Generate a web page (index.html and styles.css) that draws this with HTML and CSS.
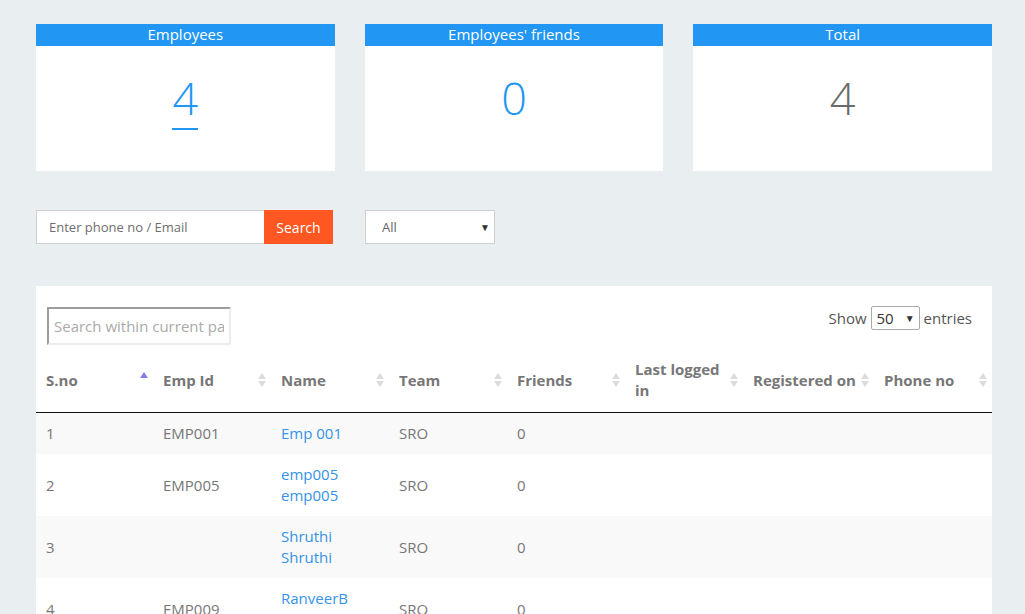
FILE: index.html
```html
<!DOCTYPE html>
<html lang="en">
<head>
<meta charset="utf-8">
<title>Employees</title>
<link rel="stylesheet" href="styles.css">
</head>
<body>
<div class="page">
  <div class="cards">
    <div class="card">
      <div class="card-head">Employees</div>
      <div class="card-body"><a class="stat stat-link" href="#">4</a></div>
    </div>
    <div class="card">
      <div class="card-head">Employees' friends</div>
      <div class="card-body"><span class="stat">0</span></div>
    </div>
    <div class="card">
      <div class="card-head">Total</div>
      <div class="card-body"><span class="stat stat-grey">4</span></div>
    </div>
  </div>

  <div class="filters">
    <div class="search-group">
      <input class="search-input" type="text" placeholder="Enter phone no / Email">
      <button class="search-btn">Search</button>
    </div>
    <div class="select-box">
      <span>All</span>
      <span class="caret">&#9660;</span>
    </div>
  </div>

  <div class="panel">
    <div class="panel-controls">
      <input class="page-search" type="text" placeholder="Search within current page">
      <div class="length">
        <span>Show</span>
        <div class="length-select"><span>50</span><span class="caret">&#9660;</span></div>
        <span>entries</span>
      </div>
    </div>
    <table class="grid">
      <colgroup>
        <col style="width:117px"><col style="width:118px"><col style="width:118px"><col style="width:118px">
        <col style="width:118px"><col style="width:118px"><col style="width:131px"><col style="width:118px">
      </colgroup>
      <thead>
        <tr>
          <th><div class="th"><span>S.no</span><svg class="sort sort-active" width="8" height="16" viewBox="0 0 8 16"><path d="M0 7 L4 1 L8 7 Z" fill="#7f7fe3"/></svg></div></th>
          <th><div class="th"><span>Emp Id</span><svg class="sort" width="8" height="16" viewBox="0 0 8 16"><path d="M0 7 L4 1 L8 7 Z M0 9 L8 9 L4 15 Z" fill="#dcdcdc"/></svg></div></th>
          <th><div class="th"><span>Name</span><svg class="sort" width="8" height="16" viewBox="0 0 8 16"><path d="M0 7 L4 1 L8 7 Z M0 9 L8 9 L4 15 Z" fill="#dcdcdc"/></svg></div></th>
          <th><div class="th"><span>Team</span><svg class="sort" width="8" height="16" viewBox="0 0 8 16"><path d="M0 7 L4 1 L8 7 Z M0 9 L8 9 L4 15 Z" fill="#dcdcdc"/></svg></div></th>
          <th><div class="th"><span>Friends</span><svg class="sort" width="8" height="16" viewBox="0 0 8 16"><path d="M0 7 L4 1 L8 7 Z M0 9 L8 9 L4 15 Z" fill="#dcdcdc"/></svg></div></th>
          <th><div class="th"><span>Last logged in</span><svg class="sort" width="8" height="16" viewBox="0 0 8 16"><path d="M0 7 L4 1 L8 7 Z M0 9 L8 9 L4 15 Z" fill="#dcdcdc"/></svg></div></th>
          <th><div class="th"><span class="nowrap">Registered on</span><svg class="sort" width="8" height="16" viewBox="0 0 8 16"><path d="M0 7 L4 1 L8 7 Z M0 9 L8 9 L4 15 Z" fill="#dcdcdc"/></svg></div></th>
          <th><div class="th"><span>Phone no</span><svg class="sort" width="8" height="16" viewBox="0 0 8 16"><path d="M0 7 L4 1 L8 7 Z M0 9 L8 9 L4 15 Z" fill="#dcdcdc"/></svg></div></th>
        </tr>
      </thead>
      <tbody>
        <tr class="odd">
          <td>1</td><td>EMP001</td><td><a href="#">Emp 001</a></td><td>SRO</td><td>0</td><td></td><td></td><td></td>
        </tr>
        <tr>
          <td>2</td><td>EMP005</td><td><a href="#">emp005<br>emp005</a></td><td>SRO</td><td>0</td><td></td><td></td><td></td>
        </tr>
        <tr class="odd">
          <td>3</td><td></td><td><a href="#">Shruthi<br>Shruthi</a></td><td>SRO</td><td>0</td><td></td><td></td><td></td>
        </tr>
        <tr>
          <td>4</td><td>EMP009</td><td><a href="#">RanveerB<br>RanveerB</a></td><td>SRO</td><td>0</td><td></td><td></td><td></td>
        </tr>
      </tbody>
    </table>
  </div>
</div>
</body>
</html>
```

FILE: styles.css
```css
* { box-sizing: border-box; }

html, body {
  margin: 0;
  padding: 0;
  background: #e9eef1;
  font-family: "Open Sans", "Liberation Sans", sans-serif;
  color: #777;
  overflow: hidden;
}

.page {
  padding: 24px 33px 0 36px;
}

.cards {
  display: grid;
  grid-template-columns: 1fr 1fr 1fr;
  column-gap: 30px;
}

.card {
  background: #fff;
  height: 147px;
}

.card-head {
  background: #2196f3;
  color: #fff;
  height: 22px;
  line-height: 20px;
  font-size: 15px;
  text-align: center;
}

.card-body {
  text-align: center;
  padding-top: 29px;
}

.stat {
  display: inline-block;
  font-size: 45px;
  font-weight: 300;
  line-height: 45px;
  color: #2196f3;
  text-decoration: none;
}

.stat-link {
  padding-bottom: 8px;
  border-bottom: 2px solid #2196f3;
}

.stat-grey {
  color: #6b6b6b;
}

.filters {
  display: flex;
  gap: 32px;
  margin-top: 39px;
}

.search-group {
  display: flex;
}

.search-input {
  width: 228px;
  height: 34px;
  border: 1px solid #cfcfcf;
  border-right: none;
  padding: 0 12px;
  font-family: inherit;
  font-size: 13px;
  color: #555;
  outline: none;
}

.search-input::placeholder { color: #6e6e6e; }

.search-btn {
  width: 69px;
  height: 34px;
  border: none;
  background: #ff5722;
  color: #fff;
  font-family: inherit;
  font-size: 14px;
  padding: 0;
}

.select-box {
  width: 130px;
  height: 34px;
  background: #fff;
  border: 1px solid #cfcfcf;
  display: flex;
  align-items: center;
  justify-content: space-between;
  padding: 0 4px 0 16px;
  font-size: 13px;
  color: #666;
}

.caret {
  font-size: 10px;
  color: #333;
}

.panel {
  background: #fff;
  margin-top: 42px;
  padding-top: 20px;
}

.panel-controls {
  display: flex;
  justify-content: space-between;
  align-items: flex-start;
  padding: 0 20px 0 11px;
}

.page-search {
  margin-top: 1px;
  width: 184px;
  height: 38px;
  border-style: solid;
  border-width: 2px;
  border-color: #9d9d9d #ececec #ececec #9d9d9d;
  padding: 0 5px;
  font-family: inherit;
  font-size: 15px;
  color: #555;
  outline: none;
}

.page-search::placeholder { color: #aaa; }

.length {
  display: flex;
  align-items: center;
  gap: 4px;
  font-size: 15px;
  color: #555;
  height: 24px;
}

.length-select {
  width: 49px;
  height: 24px;
  border: 1px solid #aaa;
  border-radius: 2px;
  display: flex;
  align-items: center;
  justify-content: space-between;
  padding: 0 4px 0 5px;
  color: #333;
}

.grid {
  width: 100%;
  margin-top: 5px;
  border-collapse: collapse;
  table-layout: fixed;
  font-size: 15px;
  line-height: 21px;
}

.grid th {
  text-align: left;
  font-weight: 700;
  color: #777;
  padding: 9px 5px 11px 10px;
  height: 62px;
  border-bottom: 1px solid #111;
  vertical-align: middle;
}

.th {
  display: flex;
  align-items: center;
  justify-content: space-between;
  gap: 2px;
}

.nowrap { white-space: nowrap; }

.sort { flex: none; }

.sort-active { margin-top: -3px; }

.grid td {
  padding: 10px;
  color: #777;
  vertical-align: middle;
}

.grid tr.odd td { background: #f9f9f9; }

.grid td a {
  color: #3592e6;
  text-decoration: none;
}
```
